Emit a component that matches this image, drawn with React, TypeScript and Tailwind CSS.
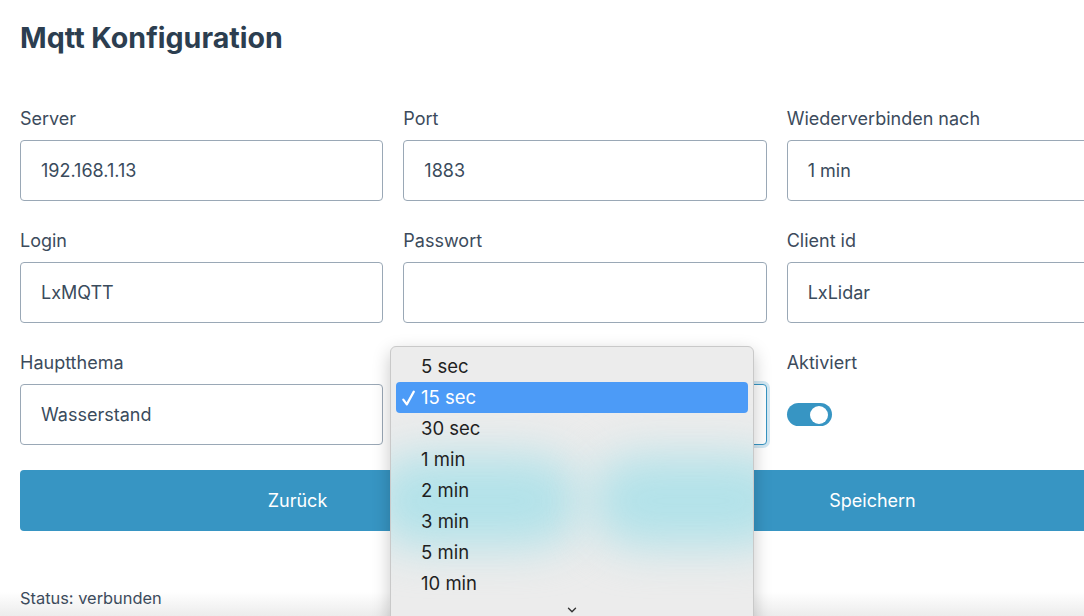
import { ChevronDown } from 'lucide-react';

interface Field {
  label: string;
  value: string;
}

const FIELDS: Field[] = [
  { label: 'Server', value: '192.168.1.13' },
  { label: 'Port', value: '1883' },
  { label: 'Wiederverbinden nach', value: '1 min' },
  { label: 'Login', value: 'LxMQTT' },
  { label: 'Passwort', value: '' },
  { label: 'Client id', value: 'LxLidar' },
  { label: 'Hauptthema', value: 'Wasserstand' },
];

const OPTIONS = ['5 sec', '15 sec', '30 sec', '1 min', '2 min', '3 min', '5 min', '10 min'];
const SELECTED = '15 sec';

function TextField({ label, value }: Field) {
  return (
    <div className="flex flex-col">
      <label className="mb-[9px] text-[18px] leading-[24px] text-[#3c4b5c]">{label}</label>
      <div className="flex h-[61px] items-center rounded-[4px] border border-[#9aa8b6] bg-white px-5 text-[18px] text-[#3a4b5c]">
        {value}
      </div>
    </div>
  );
}

function Dropdown() {
  return (
    <div className="absolute left-[390px] top-[346px] z-20 h-[290px] w-[364px] overflow-hidden rounded-[6px] border border-[#c9c9c9] bg-[#ececec] px-[5px] pt-[4px] shadow-[0_6px_18px_rgba(0,0,0,0.22)]">
      {/* buttons behind the menu shine through the frosted glass */}
      <div className="pointer-events-none absolute left-[-20px] top-[108px] h-[92px] w-[210px] rounded-full bg-[#b3e2e9] blur-[22px]" />
      <div className="pointer-events-none absolute left-[200px] top-[108px] h-[92px] w-[200px] rounded-full bg-[#b3e2e9] blur-[22px]" />
      <div className="relative">
        {OPTIONS.map((o) => {
          const active = o === SELECTED;
          return (
            <div
              key={o}
              className={`flex h-[31px] items-center rounded-[4px] text-[18.5px] ${active ? 'bg-[#4c9bf7] text-white' : 'text-[#1f1f1f]'}`}
            >
              <span className="flex w-[25px] justify-end pr-[6px]">
                {active && (
                  <svg width="13" height="16" viewBox="0 0 13 16" fill="none">
                    <path d="M1.3 9.6 L4.8 14.4 L11.8 1.6" stroke="currentColor" strokeWidth="2.2" strokeLinecap="round" strokeLinejoin="round" />
                  </svg>
                )}
              </span>
              {o}
            </div>
          );
        })}
        <div className="flex h-[20px] justify-center pt-[4px] text-[#333]">
          <ChevronDown size={14} strokeWidth={2.4} />
        </div>
      </div>
    </div>
  );
}

export default function App() {
  return (
    <div className="relative h-[616px] w-full overflow-hidden bg-white font-['Inter',sans-serif]">
      <div className="pointer-events-none absolute bottom-0 left-0 h-[24px] w-full bg-gradient-to-b from-white/0 to-[#ececec]" />

      <div className="relative w-[1170px] px-5 pt-5">
        <h1 className="text-[28.6px] font-bold leading-[36px] text-[#2c3e50]">Mqtt Konfiguration</h1>

        <div className="mt-[51px] grid grid-cols-3 gap-x-5 gap-y-[28px]">
          {FIELDS.slice(0, 6).map((f) => (
            <TextField key={f.label} {...f} />
          ))}
          <TextField {...FIELDS[6]} />
          <div className="flex flex-col">
            <div className="mb-[9px] h-[24px]" />
            <div className="h-[61px] rounded-[4px] border border-[#3795c3] bg-white ring-[3px] ring-[#d3e8f3]" />
          </div>
          <div className="flex flex-col">
            <label className="mb-[9px] text-[18px] leading-[24px] text-[#3c4b5c]">Aktiviert</label>
            <div className="flex h-[61px] items-center">
              <div className="flex h-[23px] w-[45px] items-center justify-end rounded-full bg-[#3795c3] pr-[4px]">
                <div className="h-[18px] w-[18px] rounded-full bg-white" />
              </div>
            </div>
          </div>
        </div>

        <div className="mt-[25px] grid grid-cols-2 gap-5">
          <button className="h-[61px] rounded-[4px] bg-[#3795c3] text-[18px] text-white">Zurück</button>
          <button className="h-[61px] rounded-[4px] bg-[#3795c3] text-[18px] text-white">Speichern</button>
        </div>

        <p className="mt-[55px] text-[16.4px] leading-[24px] text-[#3c4b5c]">Status: verbunden</p>
      </div>

      <Dropdown />
    </div>
  );
}
